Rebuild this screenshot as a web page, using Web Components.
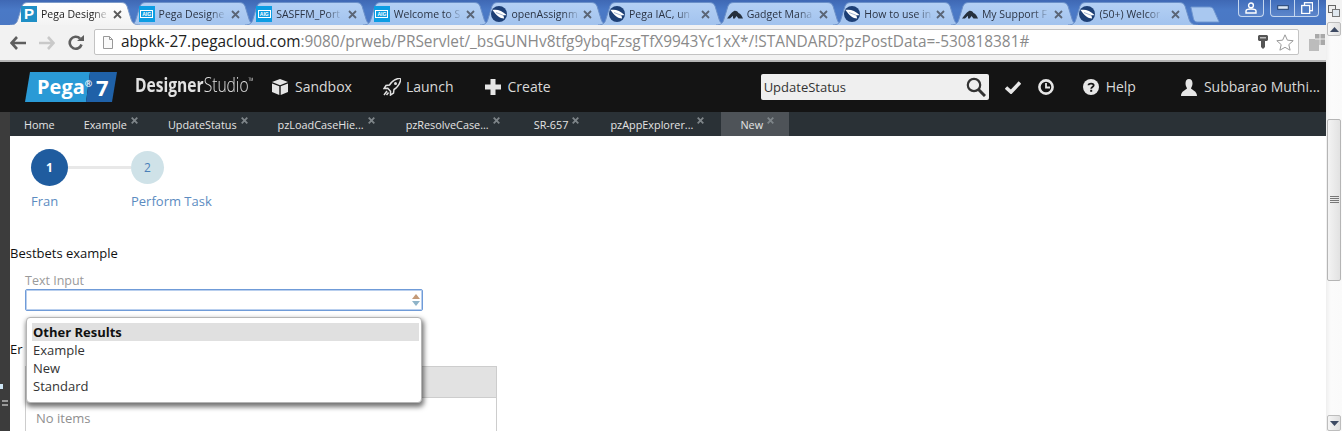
<!DOCTYPE html>
<html lang="en"><head><meta charset="utf-8"><title>Pega Designer Studio</title>
<style>
html,body{margin:0;height:431px;overflow:hidden;background:#fff;font-family:"Open Sans",sans-serif}
x-window{width:1342px;height:431px}
</style></head><body>
<x-window>
  <x-tabstrip slot="main">
    <x-browser-tab label="Pega Designe" icon="p" active></x-browser-tab>
    <x-browser-tab label="Pega Designe" icon="aig"></x-browser-tab>
    <x-browser-tab label="SASFFM_Port" icon="aig"></x-browser-tab>
    <x-browser-tab label="Welcome to S" icon="aig"></x-browser-tab>
    <x-browser-tab label="openAssignm" icon="wing"></x-browser-tab>
    <x-browser-tab label="Pega IAC, un" icon="wing"></x-browser-tab>
    <x-browser-tab label="Gadget Mana" icon="hat"></x-browser-tab>
    <x-browser-tab label="How to use in" icon="wing"></x-browser-tab>
    <x-browser-tab label="My Support F" icon="hat"></x-browser-tab>
    <x-browser-tab label="(50+) Welcor" icon="wing"></x-browser-tab>
  </x-tabstrip>
  <x-omnibar slot="main"></x-omnibar>
  <x-pega-header slot="main"></x-pega-header>
  <x-workspace slot="main">
    <x-subnav slot="nav">
      <x-work-tab fixed>Home</x-work-tab>
      <x-work-tab>Example</x-work-tab>
      <x-work-tab>UpdateStatus</x-work-tab>
      <x-work-tab>pzLoadCaseHie...</x-work-tab>
      <x-work-tab style="padding-left:16px">pzResolveCase...</x-work-tab>
      <x-work-tab style="padding-left:19px;padding-right:16px">SR-657</x-work-tab>
      <x-work-tab style="padding-right:17px">pzAppExplorer...</x-work-tab>
      <x-work-tab current>New</x-work-tab>
    </x-subnav>
    <x-stepper></x-stepper>
    <x-bestbets></x-bestbets>
  </x-workspace>
  <x-scrollcol slot="side"></x-scrollcol>
</x-window>
<script>
function def(name, html, init){
  customElements.define(name, class extends HTMLElement{
    constructor(){super();this.attachShadow({mode:'open'}).innerHTML=typeof html==='function'?html(this):html;}
    connectedCallback(){ if(init) init(this); }
  });
}
def('x-window',`<style>:host{display:grid;grid-template-columns:1326px 16px;overflow:hidden}
.m{display:flex;flex-direction:column;min-width:0;height:431px;overflow:hidden}.s{height:431px}</style>
<div class="m"><slot name="main"></slot></div><div class="s"><slot name="side"></slot></div>`);

def('x-tabstrip',`<style>:host{display:block;height:25px;position:relative;background:linear-gradient(#3f68b4,#4a79c6 40%,#4a78c4);overflow:hidden}
.r{display:flex;padding-left:10px;height:25px}
.new{flex:none;width:30px;height:17px;margin:6px 0 0 4px}
.ctl{position:absolute;top:-1px;height:18px;border:1px solid #c4d6ef;border-top:none;border-radius:0 0 4px 4px;background:linear-gradient(#3f6cba,#5c86cb);display:flex;align-items:center;justify-content:center;box-sizing:border-box}
svg{display:block}
</style><div class="r"><slot></slot>
<svg class="new" viewBox="0 0 34 17" preserveAspectRatio="none"><path d="M1 1H22C25 1 26 2 27 4L33 16H8C6 16 5 15 4 13Z" fill="#a9c8f0" stroke="#6f95cf"/></svg></div>
<div class="ctl" style="left:1238px;width:26px"><svg width="12" height="12" viewBox="0 0 12 12"><circle cx="6" cy="3.4" r="2.4" fill="none" stroke="#fff" stroke-width="1.4"/><path d="M1 11V9C1 7.5 3 7 6 7S11 7.500 11 9V11Z" fill="none" stroke="#fff" stroke-width="1.400"/></svg></div>
<div class="ctl" style="left:1270px;width:25px;border-radius:0 0 0 4px"><svg width="12" height="5" viewBox="0 0 12 5"><rect x=".7" y=".7" width="10.600" height="3.600" fill="#dbe6f6" stroke="#22406f"/></svg></div>
<div class="ctl" style="left:1294px;width:25px;border-radius:0 0 4px 0"><svg width="12" height="12" viewBox="0 0 12 12"><rect x="3.500" y=".7" width="8" height="8" fill="none" stroke="#fff" stroke-width="1.300"/><rect x=".7" y="3.500" width="8" height="8" fill="#4e7cc5" stroke="#fff" stroke-width="1.300"/></svg></div>`);

const ICONS={
 p:`<span style="display:flex;width:16px;height:16px;background:#1f8fc6;color:#fff;font:700 15px/16px 'Liberation Sans',sans-serif;align-items:center;justify-content:center">P</span>`,
 aig:`<span style="display:flex;width:16px;height:16px;background:#0c9de3;align-items:center;justify-content:center"><span style="display:block;border:1px solid #fff;color:#fff;font:700 5px/6px 'Liberation Sans',sans-serif;padding:0 1px">AIG</span></span>`,
 wing:`<svg width="16" height="16" viewBox="0 0 16 16" style="display:block"><circle cx="8" cy="8" r="8" fill="#1d3f75"/><path d="M1.500 4C6 3 11 4.500 15.500 9C14.200 9.300 13 9.300 12 9.200C12.800 10.200 13 11.200 13 12.500C9 12.500 5 9 1.500 4Z" fill="#fff"/><path d="M5 6.500L12 9.200" stroke="#7d97bd" stroke-width=".7"/></svg>`,
 hat:`<svg width="16" height="16" viewBox="0 0 16 16" style="display:block"><path d="M0 12.500C2 10 4 6.500 7 5C9 4.500 10.500 5.500 11.500 7C13.500 7.500 15 10 16 12.500H11.500L9.500 10L7.800 12.500H6L6 9.800L3 12.500Z" fill="#25303d"/></svg>`};
def('x-browser-tab',h=>{
 const a=h.hasAttribute('active');
 return `<style>:host{display:block;flex:none;width:130px;height:25px;margin-right:-12.400px;position:relative;z-index:${a?5:1}}
 svg.b{position:absolute;inset:0;width:130px;height:25px;display:block}
 .i{position:absolute;left:11px;top:6px;width:16px;height:16px}
 .t{position:absolute;left:31px;top:5px;height:18px;font:10.500px/18px "Open Sans",sans-serif;color:${a?'#222':'#2b3444'};white-space:nowrap;-webkit-mask-image:linear-gradient(90deg,#000 78%,rgba(0,0,0,.15));mask-image:linear-gradient(90deg,#000 78%,rgba(0,0,0,.15))}
 .x{position:absolute;left:103px;top:10px}</style>
 <svg class="b" viewBox="0 0 130 25"><defs><linearGradient id="g" x1="0" y1="0" x2="0" y2="1"><stop offset="0" stop-color="${a?'#fff':'#b4d0f4'}"/><stop offset="1" stop-color="${a?'#f3f3f3':'#a2c3ee'}"/></linearGradient></defs>
 <path d="M0 25C5 25 7 23 8 19L12 6C13 3.500 15 2.500 18 2.500H111C114 2.500 116 3.500 117 6L121 19C122 23 125 25 130 25" fill="url(#g)" stroke="${a?'#7d9bc9':'#6a8fc8'}"/></svg>
 <div class="i">${ICONS[h.getAttribute('icon')]}</div><div class="t">${h.getAttribute('label')}</div>
 <svg class="x" width="9" height="9" viewBox="0 0 9 9"><path d="M1 1L8 8M8 1L1 8" stroke="${a?'#5a5a5a':'#5a6576'}" stroke-width="1.800"/></svg>`;
});

def('x-omnibar',`<style>:host{display:flex;align-items:center;flex:none;height:37px;box-sizing:border-box;background:#f2f2f2;border-bottom:2px solid #b5b5b5;padding-left:10px}
svg{display:block;flex:none}
.box{margin-left:10px;width:1205px;height:26px;box-sizing:border-box;background:#fff;border:1px solid #c3c3c3;border-radius:2px;display:flex;align-items:center;padding:0 4px 0 8px;margin-top:-1px}
.u{flex:1;margin-left:8px;font:15.400px/24px "Open Sans",sans-serif;color:#8a8a8a;white-space:nowrap;overflow:hidden}.u b{font-weight:400;color:#222}
</style>
<svg width="16" height="14" viewBox="0 0 16 14"><path d="M7 1L1.500 7L7 13M2 7H16" fill="none" stroke="#5e5e5e" stroke-width="2.600"/></svg>
<svg width="16" height="14" viewBox="0 0 16 14" style="margin-left:13px"><path d="M9 1L14.500 7L9 13M14 7H0" fill="none" stroke="#c9c9c9" stroke-width="2.600"/></svg>
<svg width="16" height="16" viewBox="0 0 16 16" style="margin-left:13px"><path d="M13.500 9.500A6 6 0 1 1 12 3.500" fill="none" stroke="#5e5e5e" stroke-width="2.600"/><path d="M9 6H16V0Z" fill="#5e5e5e"/></svg>
<div class="box"><svg width="10" height="13" viewBox="0 0 10 13"><path d="M.5.500H6.500L9.500 3.500V12.500H.5ZM6.500.500V3.500H9.500" fill="#fafafa" stroke="#999"/></svg>
<div class="u"><b>abpkk-27.pegacloud.com</b>:9080/prweb/PRServlet/_bsGUNHv8tfg9ybqFzsgTfX9943Yc1xX*/!STANDARD?pzPostData=-530818381#</div>
<svg width="10" height="14" viewBox="0 0 10 14" style="margin-right:8px"><path d="M1 0H9L10 1V5L9 6H7V12L5 14L3 12V6H1L0 5V1Z" fill="#555"/><rect x="2" y="2" width="6" height="1.500" fill="#bbb"/></svg>
<svg width="18" height="17" viewBox="0 0 18 17"><path d="M9 .8L11.400 6.200L17.200 6.700L12.800 10.600L14.100 16.200L9 13.300L3.900 16.200L5.200 10.600L.8 6.700L6.600 6.200Z" fill="#fff" stroke="#999"/></svg></div>
<svg width="17" height="17" viewBox="0 0 17 17" style="margin-left:10px"><rect x="6" y="0" width="10" height="11" fill="#a9a9a9"/><rect x="0" y="5" width="10" height="12" fill="#bcbcbc"/><path d="M11 0V11M6 5H16" stroke="#eee"/></svg>`);

def('x-pega-header',`<style>:host{display:flex;align-items:center;flex:none;height:50px;background:#141414;color:#d9d9d9;font:14px/20px "Open Sans",sans-serif;padding:0 6px 0 25px;box-sizing:border-box;white-space:nowrap}
svg{display:block;flex:none}
.logo{flex:none;display:block;width:92px;height:30px;position:relative;color:#fff;font:700 20px/30px "Open Sans",sans-serif}
.logo svg{position:absolute;inset:0}.logo span{position:absolute;top:0}
.pg{left:12px}.pg sup{font:700 9px/1 "Open Sans",sans-serif;vertical-align:7px}
.sv{left:71px;font-size:22px}
.ds{flex:none;margin-left:18px;width:119px;height:24px;margin-top:-5px}
.ds span{display:inline-block;transform:scaleX(.78);transform-origin:0 50%;font:300 20px/24px "Open Sans",sans-serif;color:#e2e2e2}.ds b{font-weight:700}.ds sup{font-size:9px;vertical-align:8px;line-height:0}
.n{display:flex;align-items:center;gap:7px}
.search{margin-left:auto;width:228px;height:26px;box-sizing:border-box;background:#efefef;border-radius:2px;color:#333;font:13px/26px "Open Sans",sans-serif;padding:0 3px 0 3px;display:flex;align-items:center;justify-content:space-between}
</style>
<div class="logo"><svg width="92" height="30" viewBox="0 0 92 30"><path d="M5 0H65L61 30H0Z" fill="#2a9ad6"/><path d="M65 0H92L87 30H61Z" fill="#1f61a8"/></svg><span class="pg">Pega<sup>®</sup></span><span class="sv">7</span></div>
<div class="ds"><span><b>Designer</b>Studio<sup>™</sup></span></div>
<div class="n" style="margin-left:18px"><svg width="16" height="16" viewBox="0 0 16 16"><path d="M8 0L16 3L8 6.200L0 3Z" fill="#e6e6e6"/><path d="M0 4.400L7.300 7.300V16L0 13ZM16 4.400L8.700 7.300V16L16 13Z" fill="#e6e6e6"/></svg>Sandbox</div>
<div class="n" style="margin-left:31px;gap:5px"><svg width="18" height="18" viewBox="0 0 18 18"><path d="M18 0C13 .5 9 3 6.500 7L3 7.500L1 10.500L4.800 10.300L7.500 13.200L7.500 17L10.500 15L11 11.500C15 9 17.500 5 18 0Z" fill="none" stroke="#e0e0e0" stroke-width="1.500"/><path d="M4 13L1 17M5.500 14.500L3.500 17" stroke="#e0e0e0" stroke-width="1.500"/><circle cx="12.500" cy="5.500" r="1.500" fill="#e0e0e0"/></svg>Launch</div>
<div class="n" style="margin-left:31px"><svg width="16" height="16" viewBox="0 0 16 16"><path d="M5.500 0H10.500V5.500H16V10.500H10.500V16H5.500V10.500H0V5.500H5.500Z" fill="#e6e6e6"/></svg>Create</div>
<div class="search">UpdateStatus<svg width="20" height="20" viewBox="0 0 20 20"><circle cx="8" cy="8" r="6.200" fill="none" stroke="#333" stroke-width="2.200"/><path d="M12.500 12.500L19 19" stroke="#333" stroke-width="3"/></svg></div>
<svg style="margin-left:16px" width="16" height="13" viewBox="0 0 16 13"><path d="M1 6.500L6 11L15 1.500" fill="none" stroke="#e6e6e6" stroke-width="3.600"/></svg>
<svg style="margin-left:17px" width="16" height="16" viewBox="0 0 16 16"><circle cx="8" cy="8" r="6.600" fill="none" stroke="#e6e6e6" stroke-width="2.600"/><path d="M8 4V8.500H12" fill="none" stroke="#e6e6e6" stroke-width="1.800"/></svg>
<div class="n" style="margin-left:29px"><svg width="16" height="16" viewBox="0 0 16 16"><circle cx="8" cy="8" r="8" fill="#e6e6e6"/><path d="M5.500 6.200C5.500 4 10.700 4 10.700 6.300C10.700 8 8.200 8 8.200 9.700" fill="none" stroke="#141414" stroke-width="1.800"/><rect x="7.200" y="10.800" width="2" height="2" fill="#141414"/></svg>Help</div>
<div class="n" style="margin-left:45px"><svg width="16" height="17" viewBox="0 0 16 17"><path d="M8 0C10.500 0 11.500 2 11.500 4.500C11.500 6.500 10.500 8 10 9.500C11 11 16 12 16 17H0C0 12 5 11 6 9.500C5.500 8 4.500 6.500 4.500 4.500C4.500 2 5.500 0 8 0Z" fill="#e6e6e6"/></svg>Subbarao Muthi...</div>`);

def('x-workspace',`<style>:host{display:grid;grid-template-columns:10px 1fr;grid-template-rows:24px 1fr;flex:1;min-height:0;overflow:hidden;background:#fff}
.strip{background:#3c3c3c;position:relative;grid-row:1/3}
.strip i{position:absolute;display:block}
.c{position:relative;min-height:0;overflow:hidden;color:#111}
</style><div class="strip"><i style="left:0;top:272px;width:3px;height:5px;background:#cfe6f5"></i><i style="left:2px;top:288px;width:6px;height:2px;background:#999"></i><i style="left:2px;top:292px;width:6px;height:2px;background:#999"></i></div>
<div><slot name="nav"></slot></div><div class="c"><slot></slot></div>`);

def('x-subnav',`<style>:host{display:flex;height:24px;background:#2a3136}</style><slot></slot>`);
def('x-work-tab',h=>{const cur=h.hasAttribute('current'),fix=h.hasAttribute('fixed');
 return `<style>:host{display:flex;flex:none;height:24px;box-sizing:border-box;padding:0 ${fix?14:15}px 0 ${cur?19:15}px;background:${cur?'#4e5358':'transparent'};color:#e4e4e4;font:10.850px/26px "Open Sans",sans-serif;white-space:nowrap;${fix?'margin-left:-1px':''}}
 .x{display:block;flex:none;margin:5px 0 0 4px}</style><slot></slot>${fix?'':'<svg class="x" width="7" height="7" viewBox="0 0 7 7"><path d="M.7.7L6.300 6.300M6.300.7L.7 6.300" stroke="#7e8589" stroke-width="1.800"/></svg>'}`;});

def('x-stepper',`<style>:host{display:block;padding:13px 0 0 21px;height:100px;box-sizing:border-box;font:13px/18px "Open Sans",sans-serif;color:#5c8bc1}
.r{display:flex;align-items:center;height:37px}.a,.b{display:flex;align-items:center;justify-content:center;border-radius:50%;flex:none}
.a{width:37px;height:37px;background:#1f5c9f;color:#fff;font-weight:700;font-size:12px}.b{width:33px;height:33px;background:#cfe2e8;color:#4a80b8;font-size:12px}
.l{flex:none;width:63px;height:3px;background:#e8e8e8}
.t{display:flex;margin-top:6px}.t span:first-child{width:100px}</style>
<div class="r"><div class="a">1</div><div class="l"></div><div class="b">2</div></div>
<div class="t"><span>Fran</span><span>Perform Task</span></div>`);

def('x-bestbets',`<style>:host{display:block;position:relative;font:13px/18px "Open Sans",sans-serif;color:#111}
.h{margin:8px 0 0 0}
.lab{margin:10px 0 0 15px;color:#9a9a9a;line-height:18px;font-size:12.500px}
.inp{margin:-1px 0 0 15px;width:398px;height:22px;box-sizing:border-box;border:1px solid #6f9bd8;box-shadow:inset 0 0 0 1px #b9cfee;border-radius:2px;display:flex;align-items:center;justify-content:flex-end;padding-right:1px}
.er{margin-top:29px;height:18px;width:15px;overflow:hidden}
.tb{margin:8px 0 0 15px;width:472px;box-sizing:border-box;height:80px;border:1px solid #cdcdcd;border-bottom:none}
.th{height:30px;background:#e2e2e2;border-bottom:1px solid #cdcdcd}
.no{padding:11px 0 0 10px;color:#8f8f8f}
.dd{position:absolute;left:16px;top:73px;width:396px;height:86px;box-sizing:border-box;background:#fff;border:1px solid #b5b5b5;border-radius:4px;box-shadow:1px 3px 5px 1px rgba(0,0,0,.55);padding:5px 2px 0 5px;color:#333}
.dd div{height:18px;line-height:18px;padding-left:1px}.dd .o{background:#e0e0e0;font-weight:700;color:#111}
</style>
<div class="h">Bestbets example</div>
<div class="lab">Text Input</div>
<div class="inp"><svg width="10" height="14" viewBox="0 0 10 14" style="display:block"><path d="M5 1L9 6H1Z" fill="#c49a77"/><path d="M1 8H9L5 13Z" fill="#8fb4c9"/></svg></div>
<div class="er">Er</div>
<div class="tb"><div class="th"></div><div class="no">No items</div></div>
<div class="dd"><div class="o">Other Results</div><div>Example</div><div>New</div><div>Standard</div></div>`);

def('x-scrollcol',`<style>:host{display:flex;flex-direction:column;height:431px;background:linear-gradient(90deg,#efefef,#fbfbfb 30%,#fafafa)}
svg{display:block}
.top{height:22px;background:#f3f3f3;display:flex;justify-content:center;padding-top:5px;box-sizing:border-box}
.btn{height:12px;flex:none;margin:0 1px;border:1px solid #bdbdbd;border-radius:2px;background:linear-gradient(90deg,#f5f5f5,#e0e0e0);display:flex;align-items:center;justify-content:center}
.thumb{height:162px;flex:none;margin:0 1px;box-sizing:border-box;border:1px solid #b5b5b5;border-radius:2px;background:linear-gradient(90deg,#f3f3f3,#e2e2e2);display:flex;align-items:center;justify-content:center}
.sp{flex:none}</style>
<div class="top"><svg width="12" height="12" viewBox="0 0 12 12"><rect x=".5" y=".5" width="7" height="7" fill="#eee" stroke="#666"/><rect x="4.500" y="4.500" width="7" height="7" fill="#dfe7ee" stroke="#777"/></svg></div>
<div class="btn"><svg width="9" height="5" viewBox="0 0 9 5"><path d="M4.500 0L9 5H0Z" fill="#3d4a63"/></svg></div>
<div class="sp" style="height:83px"></div>
<div class="thumb"><svg width="9" height="8" viewBox="0 0 9 8"><path d="M0 .5H9M0 2.500H9M0 4.500H9M0 6.500H9" stroke="#777"/></svg></div>
<div class="sp" style="height:134px"></div>
<div class="btn" style="height:14px"><svg width="9" height="5" viewBox="0 0 9 5"><path d="M0 0H9L4.500 5Z" fill="#3d4a63"/></svg></div>`);
</script>
</body></html>
